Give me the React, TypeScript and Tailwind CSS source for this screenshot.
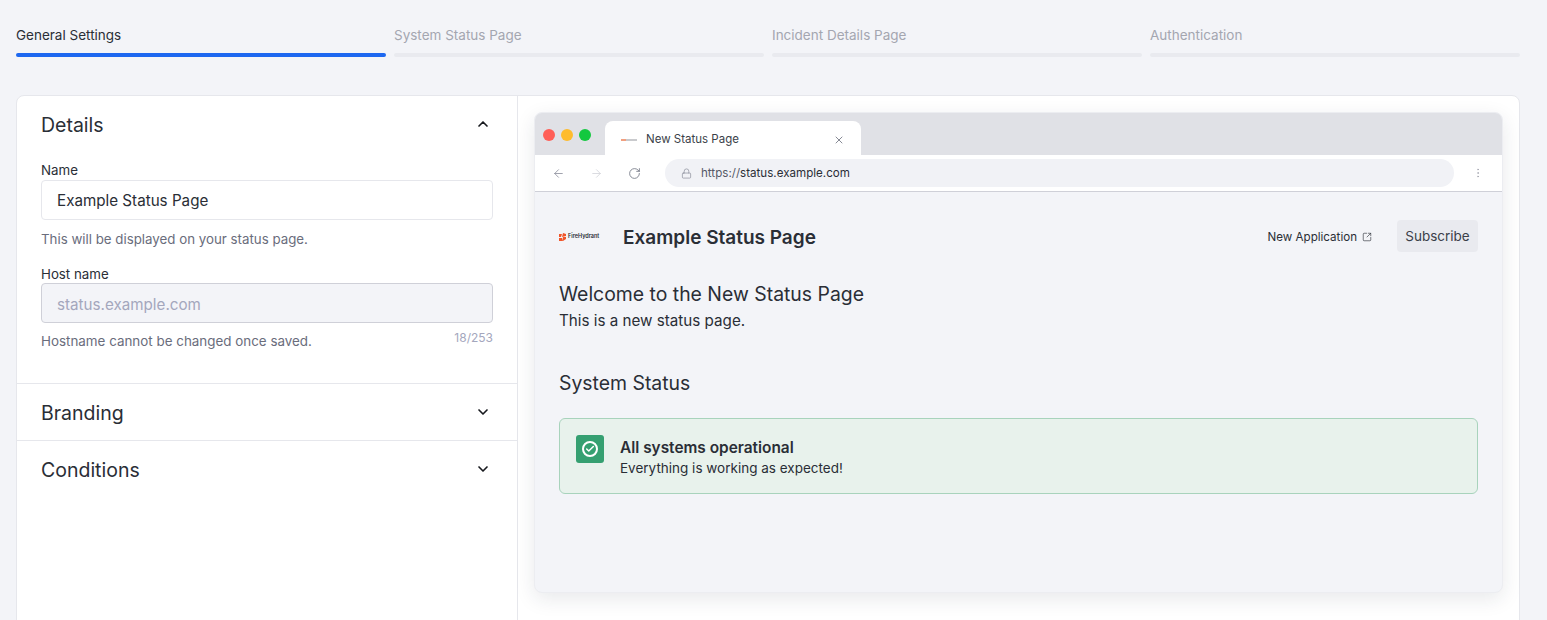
import React from 'react';
import {
  ArrowLeft,
  ArrowRight,
  Check,
  ChevronDown,
  ChevronUp,
  EllipsisVertical,
  Lock,
  RotateCw,
  SquareArrowOutUpRight,
  X,
} from 'lucide-react';

const steps = ['General Settings', 'System Status Page', 'Incident Details Page', 'Authentication'];

const FireHydrantLogo = () => (
  <div className="flex items-center gap-[2px] pt-[2px]">
    <svg width="7" height="8" viewBox="0 0 7 8">
      <path d="M0 1h3L2 4H0zM4 0l3 1v2L3 4zM0 5h3L3 8H0zM4 4h3v2L4 8H3z" fill="#f1562b" />
    </svg>
    <span className="text-[5.5px] font-semibold leading-none text-[#2a2e36]">FireHydrant</span>
  </div>
);

const Section = ({ title, open }: { title: string; open?: boolean }) => (
  <div className="flex h-[56px] items-center justify-between pl-6 pr-[26px]">
    <h2 className="pt-[4px] text-[19.5px] font-normal text-[#2a2e36]">{title}</h2>
    {open ? (
      <ChevronUp className="h-4 w-4 text-[#17191e]" strokeWidth={2.5} />
    ) : (
      <ChevronDown className="h-4 w-4 text-[#17191e]" strokeWidth={2.5} />
    )}
  </div>
);

const BrowserChrome = () => (
  <>
    {/* Tab strip */}
    <div className="flex h-[42px] items-end bg-[#e0e1e6] pl-[8px]">
      <div className="mb-[14px] flex gap-[6px] self-end">
        <span className="h-3 w-3 rounded-full bg-[#ff5f57]" />
        <span className="h-3 w-3 rounded-full bg-[#febc2e]" />
        <span className="h-3 w-3 rounded-full bg-[#13c83f]" />
      </div>
      <div className="ml-[14px] flex h-[34px] w-[256px] items-center rounded-t-lg bg-white pl-[16px] pr-[16px] pt-[3px]">
        <div className="flex w-[25px] items-center">
          <span className="h-[2px] w-[5px] bg-[#f1a080]" />
          <span className="h-[2px] w-[11px] bg-[#c9cacd]" />
        </div>
        <span className="text-[11.5px] text-[#3b3f49]">New Status Page</span>
        <X className="ml-auto h-[12px] w-[12px] text-[#5d6170]" strokeWidth={1.5} />
      </div>
    </div>
    {/* Address bar */}
    <div className="flex h-[37px] items-center border-b border-[#cfd0d8] bg-white pl-[17px] pr-[18px]">
      <ArrowLeft className="h-[13px] w-[13px] text-[#8b8e9b]" strokeWidth={1.5} />
      <ArrowRight className="ml-[25px] h-[13px] w-[13px] text-[#d3d4da]" strokeWidth={1.5} />
      <RotateCw className="ml-[25px] h-[13px] w-[13px] text-[#6e7280]" strokeWidth={1.5} />
      <div className="ml-[24px] flex h-[28px] flex-1 items-center rounded-full bg-[#f1f2f6] pl-[16px]">
        <Lock className="h-[11px] w-[11px] text-[#8b8e9b]" strokeWidth={1.5} />
        <span className="ml-[9px] pt-[2px] text-[11.6px] text-[#555966]">
          https://<span className="text-[#2a2e36]">status.example.com</span>
        </span>
      </div>
      <EllipsisVertical className="ml-[18px] h-[12px] w-[12px] text-[#a4a6b0]" strokeWidth={1.5} />
    </div>
  </>
);

const StatusPagePreview = () => (
  <div className="flex-1 px-[24px] pt-[28px]">
    <div className="flex h-[32px] items-center">
      <div className="w-[64px]">
        <FireHydrantLogo />
      </div>
      <h1 className="pt-[4px] text-[19px] font-semibold text-[#2a2e36]">Example Status Page</h1>
      <a className="ml-auto flex items-center gap-[5px] pt-[3px] text-[11.6px] text-[#2a2e36]">
        New Application
        <SquareArrowOutUpRight className="h-[10px] w-[10px]" strokeWidth={1.5} />
      </a>
      <button className="ml-[25px] h-[32px] w-[81px] rounded bg-[#e9eaef] pt-[1px] text-[13.5px] text-[#3b3f49]">
        Subscribe
      </button>
    </div>
    <h2 className="mt-[28px] text-[19.4px] leading-[28px] text-[#2a2e36]">Welcome to the New Status Page</h2>
    <p className="mt-[1px] text-[15.2px] leading-[24px] text-[#2a2e36]">This is a new status page.</p>
    <h2 className="mt-[36px] text-[19.4px] leading-[28px] text-[#2a2e36]">System Status</h2>
    <div className="mt-[21px] flex h-[76px] rounded-md border border-[#a8d3bc] bg-[#e8f2ec] pl-[16px] pt-[16px]">
      <div className="flex h-[28px] w-[28px] items-center justify-center rounded-[3px] bg-[#35a071]">
        <div className="flex h-[16px] w-[16px] items-center justify-center rounded-full border-2 border-white">
          <Check className="h-[10px] w-[10px] text-white" strokeWidth={3.5} />
        </div>
      </div>
      <div className="ml-[16px] pt-[3px]">
        <p className="text-[15.4px] font-semibold leading-[20px] text-[#2a2e36]">All systems operational</p>
        <p className="text-[13.5px] leading-[21px] text-[#2a2e36]">Everything is working as expected!</p>
      </div>
    </div>
  </div>
);

export default function App() {
  return (
    <div className="h-[620px] overflow-hidden bg-[#f3f4f8] pl-[16px] pr-[27px] font-['Inter',sans-serif]">
      {/* Stepper */}
      <div className="flex gap-2 pt-[25px]">
        {steps.map((step, i) => (
          <div key={step} className="flex-1">
            <div className={`h-[20px] text-[13.5px] leading-[20px] ${i === 0 ? 'text-[#2a2e36]' : 'text-[#a4a6b0]'}`}>
              {step}
            </div>
            <div className={`mt-[8px] h-[4px] rounded-full ${i === 0 ? 'bg-[#1d67f0]' : 'bg-[#e9eaef]'}`} />
          </div>
        ))}
      </div>

      <div className="mt-[38px] flex h-[560px] rounded-t-lg border border-[#e6e7ec] bg-white">
        {/* Form column */}
        <div className="w-[501px] shrink-0 border-r border-[#e6e7ec]">
          <Section title="Details" open />
          <div className="h-[232px] border-b border-[#e6e7ec] px-6">
            <label className="block h-[20px] pt-[8px] text-[13.3px] leading-[20px] text-[#2a2e36]">Name</label>
            <input
              readOnly
              value="Example Status Page"
              className="mt-[8px] block h-[40px] w-full rounded border border-[#e6e7ec] bg-white px-[15px] text-[15.2px] text-[#2a2e36] outline-none"
            />
            <p className="mt-[9px] text-[13.3px] leading-[20px] text-[#6a6d7c]">This will be displayed on your status page.</p>
            <label className="mt-[15px] block h-[19px] text-[13.3px] leading-[20px] text-[#2a2e36]">Host name</label>
            <input
              readOnly
              value="status.example.com"
              className="block h-[40px] w-full rounded border border-[#cfd0d8] bg-[#f3f4f8] px-[15px] pt-[2px] text-[15.2px] text-[#a4a7bd] outline-none"
            />
            <div className="mt-[8px] flex items-start justify-between">
              <p className="text-[13.4px] leading-[20px] text-[#6a6d7c]">Hostname cannot be changed once saved.</p>
              <span className="text-[12px] leading-[14px] text-[#a4a7bd]">18/253</span>
            </div>
          </div>
          <div className="border-b border-[#e6e7ec]">
            <Section title="Branding" />
          </div>
          <Section title="Conditions" />
        </div>

        {/* Preview column */}
        <div className="flex-1 pl-[16px] pr-[16px] pt-[16px]">
          <div className="flex h-[481px] flex-col overflow-hidden rounded-lg border border-[#ecedf1] bg-[#f3f4f8] shadow-[0_6px_20px_rgba(30,35,60,0.1)]">
            <BrowserChrome />
            <StatusPagePreview />
          </div>
        </div>
      </div>
    </div>
  );
}
